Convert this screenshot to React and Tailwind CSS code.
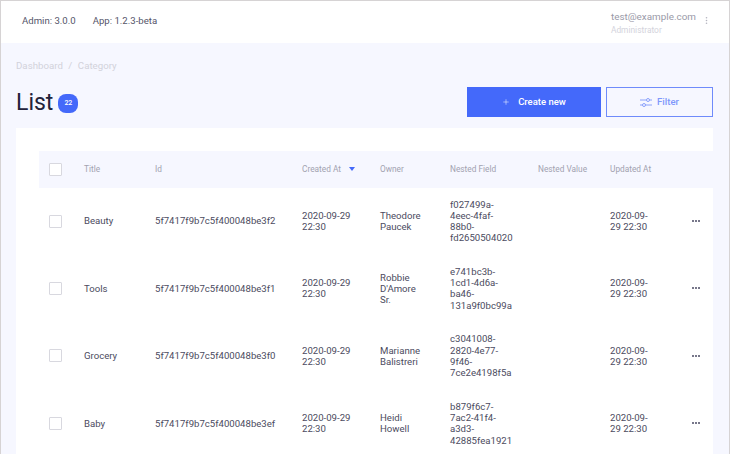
import { Plus } from 'lucide-react';

const rows = [
  { title: 'Beauty', id: '5f7417f9b7c5f400048be3f2', owner: ['Theodore', 'Paucek'], nested: ['f027499a-', '4eec-4faf-', '88b0-', 'fd2650504020'] },
  { title: 'Tools', id: '5f7417f9b7c5f400048be3f1', owner: ['Robbie', "D'Amore", 'Sr.'], nested: ['e741bc3b-', '1cd1-4d6a-', 'ba46-', '131a9f0bc99a'] },
  { title: 'Grocery', id: '5f7417f9b7c5f400048be3f0', owner: ['Marianne', 'Balistreri'], nested: ['c3041008-', '2820-4e77-', '9f46-', '7ce2e4198f5a'] },
  { title: 'Baby', id: '5f7417f9b7c5f400048be3ef', owner: ['Heidi', 'Howell'], nested: ['b879f6c7-', '7ac2-41f4-', 'a3d3-', '42885fea1921'] },
];

const Checkbox = () => (
  <div className="w-[13px] h-[13px] bg-white border border-[#d8d8df] rounded-[1px]" />
);

const Lines = ({ items }) => (
  <div>
    {items.map(line => (
      <div key={line}>{line}</div>
    ))}
  </div>
);

const FilterIcon = () => (
  <svg width="12" height="11" viewBox="0 0 12 11" fill="none" stroke="currentColor" strokeWidth="0.9">
    <path d="M0 3h6.5M9.5 3H12M0 8h2.5M5.5 8H12" />
    <circle cx="8" cy="3" r="1.5" />
    <circle cx="4" cy="8" r="1.5" />
  </svg>
);

const RowMenu = () => (
  <svg width="8" height="2" className="ml-[1px] text-[#77778a]" fill="currentColor">
    <rect x="0" y="0" width="2" height="2" />
    <rect x="3" y="0" width="2" height="2" />
    <rect x="6" y="0" width="2" height="2" />
  </svg>
);

const Row = ({ row }) => (
  <div className="flex items-center h-[67.4px] text-[9.6px] leading-[11.3px] text-[#4b4b60]">
    <div className="w-[45px] pl-[10px]"><Checkbox /></div>
    <div className="w-[71px]">{row.title}</div>
    <div className="w-[147px]">{row.id}</div>
    <div className="w-[78px]"><Lines items={['2020-09-29', '22:30']} /></div>
    <div className="w-[70px]"><Lines items={row.owner} /></div>
    <div className="w-[88px]"><Lines items={row.nested} /></div>
    <div className="w-[72px]" />
    <div className="w-[81px]"><Lines items={['2020-09-', '29 22:30']} /></div>
    <RowMenu />
  </div>
);

export default function App() {
  return (
    <div className="h-[454px] overflow-hidden bg-[#f6f7ff] border-t border-l border-r border-[#d6d3d4] font-['Roboto',sans-serif]">
      {/* Top bar */}
      <header className="h-[42px] bg-white flex items-center pl-[21px] pr-[21px] text-[#55556a]">
        <div className="flex gap-[17px] text-[9.6px] -mt-[1px]">
          <span>Admin: 3.0.0</span>
          <span>App: 1.2.3-beta</span>
        </div>
        <div className="ml-auto flex items-start gap-[9px] mt-[2px]">
          <div>
            <div className="text-[9.9px] leading-[13px] text-[#9a9aa8]">test@example.com</div>
            <div className="text-[8.4px] leading-[14px] text-[#d3d3dc]">Administrator</div>
          </div>
          <svg width="3" height="7" className="mt-[7px] text-[#b4b4bf]" fill="currentColor">
            <circle cx="1.5" cy="0.8" r="0.8" />
            <circle cx="1.5" cy="3.5" r="0.8" />
            <circle cx="1.5" cy="6.2" r="0.8" />
          </svg>
        </div>
      </header>

      <main className="pl-[15px] pr-[16px]">
        <div className="pt-[17px] text-[9.7px] leading-[12px] text-[#d2d2db] flex gap-[5.5px]">
          <span>Dashboard</span>
          <span>/</span>
          <span>Category</span>
        </div>

        <div className="flex items-end mt-[15px]">
          <div className="flex items-center gap-[5px]">
            <h1 className="text-[23px] leading-[29px] text-[#22223a]">List</h1>
            <span className="w-[20px] h-[19px] rounded-[8px] bg-[#4469fa] text-white text-[7px] font-medium flex items-center justify-center mt-[2px]">22</span>
          </div>
          <div className="ml-auto flex gap-[5px]">
            <button className="w-[134px] h-[30px] bg-[#4469fa] text-white text-[9.5px] font-medium flex items-center justify-center gap-[8px]">
              <Plus size={8} strokeWidth={1.5} />
              Create new
            </button>
            <button className="w-[107px] h-[30px] border border-[#6f8bfb] text-[#7f97fb] text-[9.6px] font-medium flex items-center justify-center gap-[5px]">
              <FilterIcon />
              Filter
            </button>
          </div>
        </div>

        {/* Table card */}
        <section className="bg-white mt-[11px] pt-[23px] pl-[23px]">
          <div className="flex items-center h-[37px] bg-[#f6f7ff] text-[8.3px] text-[#a2a2b0]">
            <div className="w-[45px] pl-[10px]"><Checkbox /></div>
            <div className="w-[71px]">Title</div>
            <div className="w-[147px]">Id</div>
            <div className="w-[78px] flex items-center gap-[8px] -mt-[1px]">
              Created At
              <svg width="6" height="4" className="text-[#4469fa]" fill="currentColor"><path d="M0 0h6L3 4z" /></svg>
            </div>
            <div className="w-[70px]">Owner</div>
            <div className="w-[88px]">Nested Field</div>
            <div className="w-[72px]">Nested Value</div>
            <div className="w-[81px]">Updated At</div>
          </div>
          <div className="-mt-[0.6px]">
            {rows.map(row => (
              <Row key={row.id} row={row} />
            ))}
          </div>
        </section>
      </main>
    </div>
  );
}
